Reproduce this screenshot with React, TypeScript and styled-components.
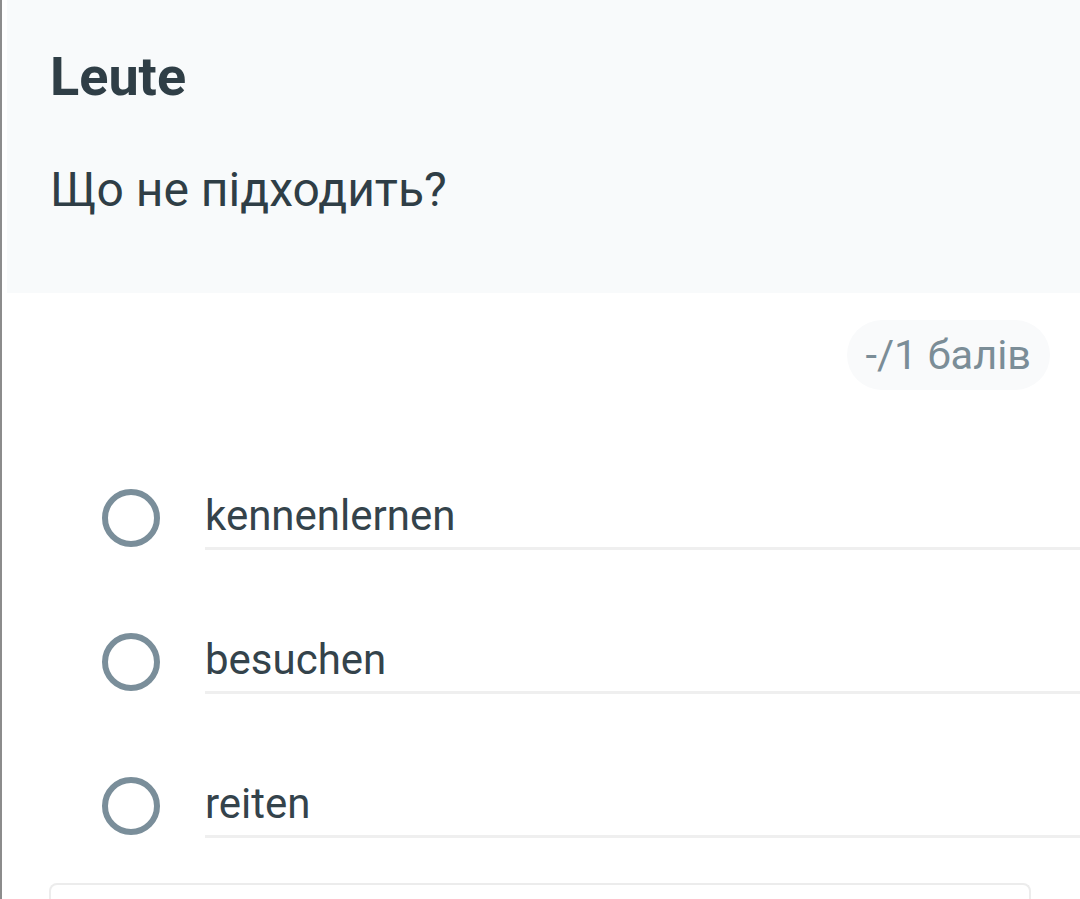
import React from "react";
import styled, { createGlobalStyle } from "styled-components";

const Global = createGlobalStyle`
  html, body { margin: 0; padding: 0; background: #ffffff; }
  body { font-family: Roboto, "Noto Sans", Arial, sans-serif; overflow: hidden; }
`;

const Screen = styled.div`
  display: flex;
  flex-direction: column;
  height: 899px;
  overflow: hidden;
  border-left: 2px solid #8c8c8c;
  padding-left: 5px;
  box-sizing: border-box;
  background: #ffffff;
`;

const Header = styled.header`
  flex: none;
  background: #f8fafb;
  height: 293px;
  box-sizing: border-box;
  padding: 45px 0 0 43px;
`;

const Title = styled.h1`
  margin: 0;
  font-size: 54px;
  line-height: 64px;
  font-weight: 700;
  color: #2f3e46;
`;

const Question = styled.p`
  margin: 53px 0 0;
  font-size: 48px;
  line-height: 56px;
  font-weight: 400;
  color: #2f3e46;
`;

const PointsRow = styled.div`
  display: flex;
  justify-content: flex-end;
  margin-top: 27px;
  padding-right: 30px;
`;

const Pill = styled.span`
  display: inline-block;
  height: 70px;
  line-height: 70px;
  padding: 0 19px 0 18px;
  border-radius: 35px;
  background: #f9fafb;
  color: #7b8d97;
  font-size: 41.5px;
`;

const Options = styled.div`
  display: flex;
  flex-direction: column;
  gap: 84px;
  margin-top: 100px;
  padding-left: 95px;
`;

const OptionRow = styled.label`
  display: flex;
  align-items: flex-start;
  gap: 45px;
  cursor: pointer;
`;

const Radio = styled.span`
  flex: none;
  width: 58px;
  height: 58px;
  margin-top: -1px;
  box-sizing: border-box;
  border-radius: 50%;
  border: 6px solid #7a8e9a;
`;

const OptionText = styled.span`
  flex: 1;
  font-size: 42px;
  line-height: 52px;
  color: #34434b;
  padding-bottom: 5px;
  border-bottom: 3px solid #efefef;
`;

const AnswerBox = styled.div`
  flex: 1;
  margin: 45px 49px 0 42px;
  min-height: 10px;
  border: 2px solid #ececec;
  border-bottom: none;
  border-radius: 8px 8px 0 0;
`;

const options = ["kennenlernen", "besuchen", "reiten"];

export default function App() {
  return (
    <>
      <Global />
      <Screen>
        <Header>
          <Title>Leute</Title>
          <Question>Що не підходить?</Question>
        </Header>
        <PointsRow>
          <Pill>-/1 балів</Pill>
        </PointsRow>
        <Options>
          {options.map((o) => (
            <OptionRow key={o}>
              <Radio />
              <OptionText>{o}</OptionText>
            </OptionRow>
          ))}
        </Options>
        <AnswerBox />
      </Screen>
    </>
  );
}
